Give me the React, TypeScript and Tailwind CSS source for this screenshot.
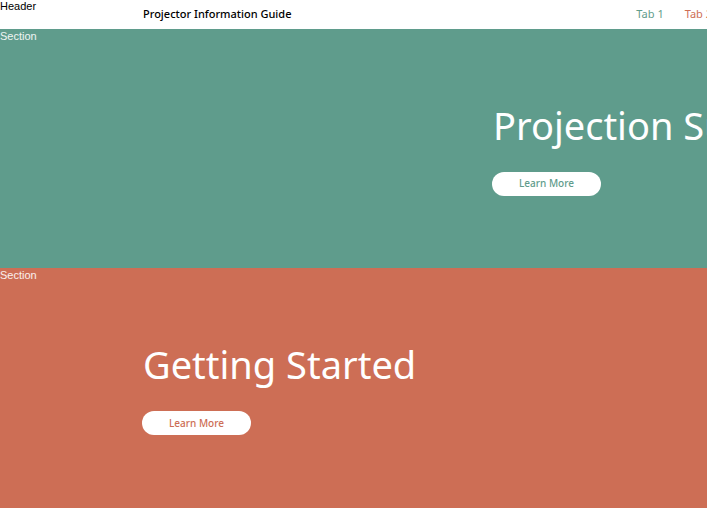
export default function App() {
  return (
    <div className="w-[707px] h-[508px] overflow-hidden bg-white font-['Noto_Sans',sans-serif]">
      <header className="relative h-[29px] bg-white flex items-center">
        <span className="absolute left-0 top-0 text-[11px] leading-[13px] text-black font-['Liberation_Sans',sans-serif]">Header</span>
        <div className="pl-[143px] text-[11px] font-medium text-black">Projector Information Guide</div>
        <nav className="ml-auto flex gap-[21px] text-[11px] -mr-[5px]">
          <span className="text-[#5f9c8c]">Tab 1</span>
          <span className="text-[#cd6e55]">Tab 2</span>
        </nav>
      </header>

      <section className="relative h-[239px] bg-[#5f9c8c] flex flex-col justify-center pl-[493px] whitespace-nowrap">
        <span className="absolute left-0 top-0 text-[11px] leading-[14px] text-white/90 font-['Liberation_Sans',sans-serif]">Section</span>
        <h2 className="text-[38px] leading-[46px] text-white font-normal">Projection Support</h2>
        <button className="mt-[24px] -ml-[1px] w-[109px] h-[24px] rounded-full bg-white text-[#5f9c8c] text-[10px] font-medium">Learn More</button>
      </section>

      <section className="relative h-[240px] bg-[#cd6e55] flex flex-col justify-center pl-[143px] whitespace-nowrap">
        <span className="absolute left-0 top-0 text-[11px] leading-[14px] text-white/90 font-['Liberation_Sans',sans-serif]">Section</span>
        <h2 className="text-[38px] leading-[46px] text-white font-normal">Getting Started</h2>
        <button className="mt-[24px] -ml-[1px] w-[109px] h-[24px] rounded-full bg-white text-[#cd6e55] text-[10px] font-medium">Learn More</button>
      </section>
    </div>
  )
}
